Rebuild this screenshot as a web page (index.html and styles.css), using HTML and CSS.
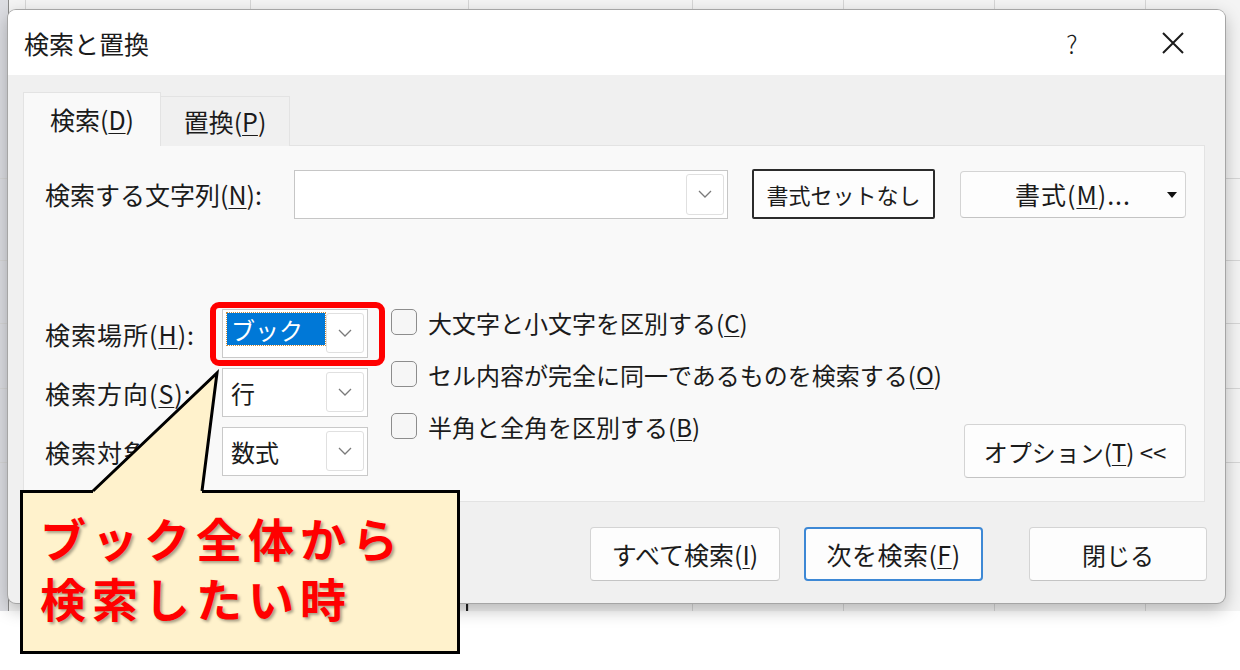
FILE: index.html
```html
<!DOCTYPE html>
<html lang="ja">
<head>
    <meta charset="UTF-8">
    <title>検索と置換</title>
    <link rel="stylesheet" href="styles.css">
</head>
<body>

<div class="sheet">
    <!--ダイアログ-->
    <div class="dialog">
        <div class="titlebar">
            <span class="title">検索と置換</span>
            <span class="help">?</span>
            <span class="close">
                <svg width="24" height="24" viewBox="0 0 24 24"><path d="M2 2L22 22M22 2L2 22" stroke="#1b1b1b" stroke-width="2" fill="none"/></svg>
            </span>
        </div>

        <div class="dlg-body">
            <!--タブ-->
            <ul class="tabs">
                <li class="tab current">検索(<u>D</u>)</li>
                <li class="tab">置換(<u>P</u>)</li>
            </ul>

            <div class="panel">
                <div class="find-row">
                    <span class="find-label">検索する文字列(<u>N</u>):</span>
                    <div class="input">
                        <span class="drop"><svg width="14" height="8" viewBox="0 0 14 8"><path d="M1 1l6 6 6-6" fill="none" stroke="#7a7a7a" stroke-width="1.3"/></svg></span>
                    </div>
                    <div class="btn btn-outline">書式セットなし</div>
                    <div class="btn btn-format">書式(<u>M</u>)...<span class="caret"></span></div>
                </div>

                <div class="options">
                    <div class="fields">
                        <div class="field">
                            <span class="field-label">検索場所(<u>H</u>):</span>
                            <div class="combo marked">
                                <span class="value selected">ブック</span>
                                <span class="drop"><svg width="14" height="8" viewBox="0 0 14 8"><path d="M1 1l6 6 6-6" fill="none" stroke="#7a7a7a" stroke-width="1.3"/></svg></span>
                            </div>
                        </div>
                        <div class="field">
                            <span class="field-label">検索方向(<u>S</u>):</span>
                            <div class="combo">
                                <span class="value">行</span>
                                <span class="drop"><svg width="14" height="8" viewBox="0 0 14 8"><path d="M1 1l6 6 6-6" fill="none" stroke="#7a7a7a" stroke-width="1.3"/></svg></span>
                            </div>
                        </div>
                        <div class="field">
                            <span class="field-label">検索対象(<u>L</u>):</span>
                            <div class="combo">
                                <span class="value">数式</span>
                                <span class="drop"><svg width="14" height="8" viewBox="0 0 14 8"><path d="M1 1l6 6 6-6" fill="none" stroke="#7a7a7a" stroke-width="1.3"/></svg></span>
                            </div>
                        </div>
                    </div>

                    <ul class="checks">
                        <li><span class="checkbox"></span>大文字と小文字を区別する(<u>C</u>)</li>
                        <li><span class="checkbox"></span>セル内容が完全に同一であるものを検索する(<u>O</u>)</li>
                        <li><span class="checkbox"></span>半角と全角を区別する(<u>B</u>)</li>
                    </ul>

                    <div class="btn btn-options">オプション(<u>T</u>) &lt;&lt;</div>
                </div>
            </div>

            <!--下のボタン-->
            <div class="footer">
                <div class="btn btn-all">すべて検索(<u>I</u>)</div>
                <div class="btn btn-next">次を検索(<u>F</u>)</div>
                <div class="btn btn-close">閉じる</div>
            </div>
        </div>
    </div>
</div>

<!--吹き出し-->
<div class="callout">
    <svg class="pointer" width="140" height="130" viewBox="0 0 140 130">
        <polygon points="10,121 134,5 119,121 119,126 10,126" fill="#fff2cc"/>
        <polyline points="10,123 134,5 119,123" fill="none" stroke="#000" stroke-width="3"/>
    </svg>
    <p class="callout-text">ブック全体から<br>検索したい時</p>
</div>

</body>
</html>
```

FILE: styles.css
```css
* {
    margin: 0;
    padding: 0;
    list-style: none;
    box-sizing: border-box;
}

body {
    width: 1240px;
    height: 670px;
    position: relative;
    overflow: hidden;
    background-color: #ffffff;
    font-family: "Noto Sans CJK JP", "Noto Sans", sans-serif;
    font-size: 24px;
    color: #1b1b1b;
}

u {
    text-underline-offset: 3px;
    text-decoration-thickness: 1px;
}

/*背景のシート*/
.sheet {
    height: 611px;
    position: relative;
    background-color: #f4f4f4;
    background-image:
        linear-gradient(#222, #222),
        linear-gradient(#d6d6d6, #d6d6d6),
        linear-gradient(#d6d6d6, #d6d6d6),
        linear-gradient(#d6d6d6, #d6d6d6),
        linear-gradient(#d6d6d6, #d6d6d6),
        linear-gradient(#d6d6d6, #d6d6d6),
        linear-gradient(#d6d6d6, #d6d6d6),
        linear-gradient(#d6d6d6, #d6d6d6),
        linear-gradient(#d6d6d6, #d6d6d6),
        linear-gradient(#d6d6d6, #d6d6d6),
        linear-gradient(#d6d6d6, #d6d6d6),
        linear-gradient(#d6d6d6, #d6d6d6),
        linear-gradient(#d6d6d6, #d6d6d6),
        linear-gradient(#8a8a8a, #8a8a8a),
        linear-gradient(#dcdde2, #dcdde2);
    background-size:
        2px 12px,
        1px 100%, 1px 100%, 1px 100%, 1px 100%, 1px 100%, 1px 100%, 1px 100%,
        100% 1px, 100% 1px, 100% 1px, 100% 1px, 100% 1px,
        1px 100%,
        8px 100%;
    background-position:
        466px 600px,
        25px 0, 250px 0, 468px 0, 692px 0, 843px 0, 994px 0, 1145px 0,
        0 178px, 0 260px, 0 323px, 0 388px, 0 462px,
        8px 0,
        0 0;
    background-repeat: no-repeat;
}

.dialog {
    position: absolute;
    left: 8px;
    top: 10px;
    width: 1217px;
    height: 593px;
    border-radius: 8px;
    overflow: hidden;
    background-color: #f0f0f0;
    box-shadow: 0 0 0 1px #a5a5a5, 0 6px 18px rgba(0, 0, 0, 0.28);
}

.titlebar {
    height: 65px;
    display: flex;
    align-items: center;
    padding: 0 22px 0 16px;
    background-color: #ffffff;
}

.title {
    flex: 1;
    font-size: 25px;
}

.help {
    width: 40px;
    margin-right: 51px;
    text-align: center;
    font-size: 25px;
    font-weight: 300;
}

.close {
    width: 60px;
    display: flex;
    justify-content: center;
}

.dlg-body {
    padding: 17px 20px 0 15px;
}

/*タブ*/
.tabs {
    height: 54px;
    display: flex;
    align-items: flex-end;
    position: relative;
    z-index: 1;
    margin-bottom: -1px;
    font-size: 25px;
}

.tab {
    width: 129px;
    height: 50px;
    display: flex;
    justify-content: center;
    align-items: center;
    padding-bottom: 2px;
    background-color: #f0f0f0;
    border: 1px solid #e3e3e3;
    border-left: none;
    border-bottom: none;
}

.tab.current {
    width: 138px;
    height: 54px;
    background-color: #f9f9f9;
    border-left: 1px solid #e3e3e3;
}

.panel {
    height: 357px;
    padding: 23px 18px 0 21px;
    background-color: #f9f9f9;
    border: 1px solid #e3e3e3;
}

.find-row {
    height: 50px;
    display: flex;
    align-items: center;
}

.find-label {
    width: 249px;
    font-size: 25px;
}

.input {
    width: 434px;
    height: 49px;
    display: flex;
    justify-content: flex-end;
    padding: 3px;
    background-color: #ffffff;
    border: 1px solid #c6c6c6;
}

.drop {
    width: 38px;
    display: flex;
    justify-content: center;
    align-items: center;
    background-color: #ffffff;
    border: 1px solid #e0e0e0;
    border-radius: 3px;
}

/*ボタン*/
.btn {
    display: flex;
    justify-content: center;
    align-items: center;
    background-color: #fdfdfd;
    border: 1px solid #d4d4d4;
    border-bottom-color: #c4c4c4;
    border-radius: 4px;
}

.btn-outline {
    width: 183px;
    height: 50px;
    margin-left: 24px;
    font-size: 22px;
    border: 2px solid #2b2b2b;
    border-radius: 2px;
}

.btn-format {
    width: 226px;
    height: 47px;
    margin-left: 25px;
    position: relative;
    font-size: 25px;
    letter-spacing: 1px;
}

.caret {
    position: absolute;
    right: 8px;
    top: 20px;
    border-left: 5px solid transparent;
    border-right: 5px solid transparent;
    border-top: 6px solid #111;
}

.options {
    margin-top: 90px;
    display: flex;
    align-items: flex-start;
}

.fields {
    width: 323px;
}

.field {
    height: 49px;
    margin-bottom: 10px;
    display: flex;
    align-items: center;
}

.field-label {
    width: 177px;
    font-size: 25px;
    letter-spacing: 1px;
}

.combo {
    width: 146px;
    height: 49px;
    display: flex;
    padding: 3px 3px 4px 4px;
    background-color: #ffffff;
    border: 1px solid #c9c9c9;
}

.combo .value {
    flex: 1;
    padding-left: 4px;
    display: flex;
    align-items: center;
}

.combo .value.selected {
    align-self: flex-start;
    height: 32px;
    margin-right: 1px;
    padding-left: 4px;
    color: #ffffff;
    background-color: #0078d7;
    outline: 1px dotted #c98a3c;
}

/*赤い枠*/
.combo.marked {
    position: relative;
}

.combo.marked::after {
    content: '';
    position: absolute;
    left: -13px;
    top: -8px;
    right: -18px;
    bottom: -9px;
    border: 6px solid #ff0000;
    border-radius: 9px;
}

.checks {
    margin-left: 23px;
    margin-top: -13px;
}

.checks li {
    height: 52px;
    display: flex;
    align-items: center;
}

.checkbox {
    width: 26px;
    height: 26px;
    margin-right: 11px;
    background-color: #f6f6f6;
    border: 1.5px solid #8d8d8d;
    border-radius: 5px;
}

.btn-options {
    width: 222px;
    height: 54px;
    margin-left: auto;
    margin-top: 115px;
}

.footer {
    margin-top: 25px;
    margin-right: -2px;
    display: flex;
    justify-content: flex-end;
}

.footer .btn {
    height: 54px;
}

.btn-all {
    width: 190px;
    font-size: 25px;
}

.btn-next {
    width: 179px;
    margin-left: 24px;
    font-size: 25px;
    letter-spacing: 0.5px;
    border: 2px solid #3d88d5;
}

.btn-close {
    width: 178px;
    margin-left: 46px;
}

/*吹き出し*/
.callout {
    position: absolute;
    left: 20px;
    top: 490px;
    width: 440px;
    height: 164px;
    padding: 14px 0 0 17px;
    background-color: #fff2cc;
    border: 3px solid #000000;
}

.pointer {
    position: absolute;
    left: 60px;
    top: -125px;
}

.callout-text {
    font-size: 46px;
    font-weight: bold;
    line-height: 60px;
    letter-spacing: 6px;
    color: #ff0000;
    text-shadow: 2px 2px 3px rgba(0, 0, 0, 0.35);
}
```
